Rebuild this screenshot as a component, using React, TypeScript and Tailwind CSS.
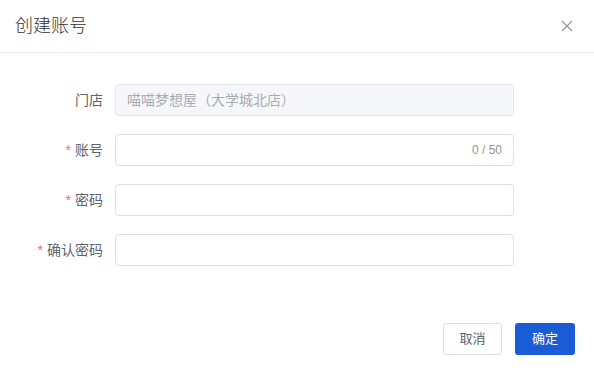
import React from "react";

const font = { fontFamily: '"Liberation Sans", "Noto Sans CJK SC", "Noto Sans", sans-serif' };

function Row({ label, required, children }: { label: string; required?: boolean; children: React.ReactNode }) {
  return (
    <div className="flex items-center h-[32px]">
      <div className="w-[103px] flex justify-end items-center text-[14px] text-[#606266] shrink-0">
        {required && <span className="text-[#f56c6c] mr-[4px] text-[14px]">*</span>}
        <span>{label}</span>
      </div>
      <div className="ml-[12px] w-[399px] h-full">{children}</div>
    </div>
  );
}

export default function App() {
  return (
    <div className="w-[594px] h-[374px] bg-white flex flex-col" style={font}>
      <div className="h-[53px] border-b border-[#ebeef5] flex items-center justify-between pl-[15px] pr-[20px] shrink-0">
        <span className="text-[18px] text-[#303133] leading-none font-light">创建账号</span>
        <svg width="12" height="12" viewBox="0 0 12 12" className="mr-[1px]">
          <path d="M1 1 L11 11 M11 1 L1 11" stroke="#909399" strokeWidth="1.1" />
        </svg>
      </div>
      <div className="flex flex-col gap-[18px] pt-[31px]">
        <Row label="门店">
          <div className="h-full rounded-[4px] border border-[#e4e7ed] bg-[#f5f7fa] flex items-center px-[11px] text-[14px] text-[#a8abb2]">
            喵喵梦想屋（大学城北店）
          </div>
        </Row>
        <Row label="账号" required>
          <div className="h-full rounded-[4px] border border-[#dcdfe6] bg-white flex items-center justify-end px-[11px] text-[12px] text-[#909399]">
            0 / 50
          </div>
        </Row>
        <Row label="密码" required>
          <div className="h-full rounded-[4px] border border-[#dcdfe6] bg-white" />
        </Row>
        <Row label="确认密码" required>
          <div className="h-full rounded-[4px] border border-[#dcdfe6] bg-white" />
        </Row>
      </div>
      <div className="flex justify-end gap-[13px] pr-[19px] mt-[57px]">
        <button className="w-[59px] h-[32px] rounded-[3px] border border-[#dcdfe6] bg-white text-[13px] text-[#606266]">
          取消
        </button>
        <button className="w-[60px] h-[32px] rounded-[3px] bg-[#1a5cd6] text-[13px] text-white">
          确定
        </button>
      </div>
    </div>
  );
}
